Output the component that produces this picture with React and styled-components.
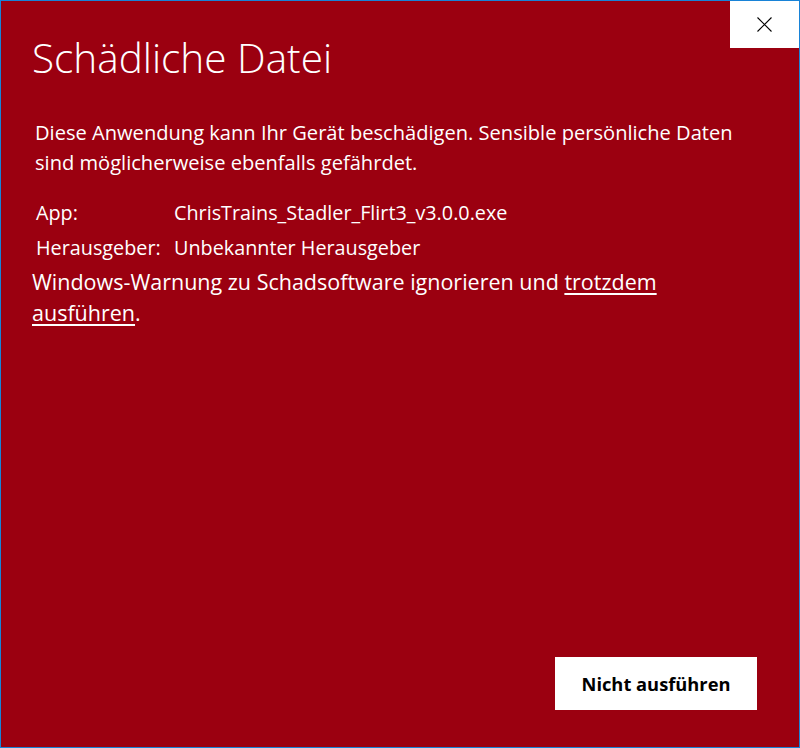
import React from 'react';
import styled, { createGlobalStyle } from 'styled-components';

const GlobalStyle = createGlobalStyle`
  html, body {
    margin: 0;
    padding: 0;
    background: #9b0010;
  }
  * {
    box-sizing: border-box;
  }
`;

const Window = styled.div`
  width: 800px;
  height: 748px;
  display: flex;
  flex-direction: column;
  background: #9b0010;
  border: 1px solid #1883d7;
  color: #fff;
  font-family: 'Open Sans', 'Noto Sans', sans-serif;
`;

const Header = styled.div`
  display: flex;
  justify-content: space-between;
  align-items: flex-start;
`;

const Title = styled.h1`
  margin: 31px 0 0 31px;
  font-size: 40.5px;
  font-weight: 300;
  line-height: 52px;
`;

const CloseButton = styled.button`
  width: 69px;
  height: 47px;
  display: flex;
  align-items: center;
  justify-content: center;
  border: none;
  background: #fff;
  padding: 0;
  cursor: pointer;
`;

const Content = styled.div`
  flex: 1;
  display: flex;
  flex-direction: column;
  padding: 0 40px 0 31px;
`;

const Message = styled.p`
  max-width: 720px;
  margin: 34px 0 0 3px;
  font-size: 20.1px;
  line-height: 30px;
`;

const InfoTable = styled.div`
  display: grid;
  grid-template-columns: 138px 1fr;
  margin: 17px 0 0 4px;
  font-size: 19.8px;
  line-height: 35px;
`;

const Warning = styled.p`
  max-width: 690px;
  margin: 1px 0 0;
  font-size: 21.5px;
  line-height: 31px;
`;

const RunLink = styled.a`
  color: #fff;
  text-decoration: underline;
  text-underline-offset: 3px;
  cursor: pointer;
`;

const Footer = styled.div`
  display: flex;
  justify-content: flex-end;
  padding: 0 42px 37px 0;
`;

const PrimaryButton = styled.button`
  width: 202px;
  height: 53px;
  border: none;
  background: #fff;
  color: #000;
  font-family: 'Open Sans', 'Noto Sans', sans-serif;
  font-size: 18.3px;
  font-weight: 700;
  cursor: pointer;
`;

const CloseIcon = () => (
  <svg width="15" height="15" viewBox="0 0 15 15">
    <path d="M0.5 0.5 L14.5 14.5 M14.5 0.5 L0.5 14.5" stroke="#000" strokeWidth="1.1" fill="none" />
  </svg>
);

export default function App() {
  return (
    <>
      <GlobalStyle />
      <Window>
        <Header>
          <Title>Schädliche Datei</Title>
          <CloseButton aria-label="Schließen">
            <CloseIcon />
          </CloseButton>
        </Header>
        <Content>
          <Message>
            Diese Anwendung kann Ihr Gerät beschädigen. Sensible persönliche Daten
            sind möglicherweise ebenfalls gefährdet.
          </Message>
          <InfoTable>
            <span>App:</span>
            <span>ChrisTrains_Stadler_Flirt3_v3.0.0.exe</span>
            <span>Herausgeber:</span>
            <span>Unbekannter Herausgeber</span>
          </InfoTable>
          <Warning>
            Windows-Warnung zu Schadsoftware ignorieren und <RunLink>trotzdem ausführen</RunLink>.
          </Warning>
        </Content>
        <Footer>
          <PrimaryButton>Nicht ausführen</PrimaryButton>
        </Footer>
      </Window>
    </>
  );
}
